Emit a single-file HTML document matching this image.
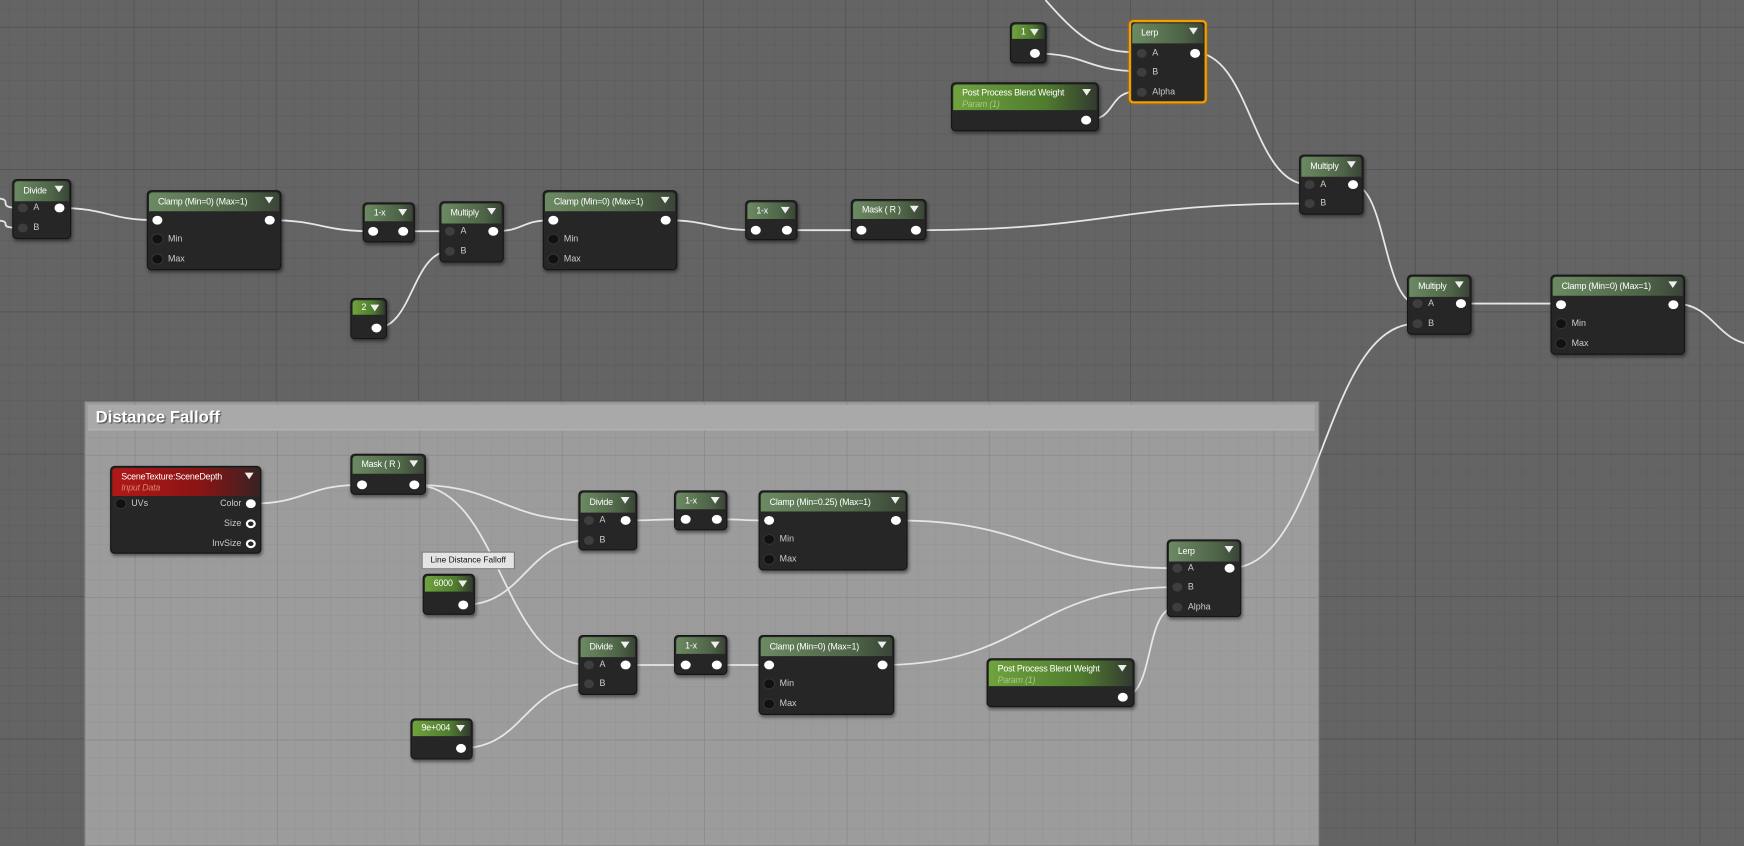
<!DOCTYPE html>
<html><head><meta charset="utf-8"><style>
html,body{margin:0;padding:0;width:1744px;height:844px;overflow:hidden;background:#626262}
#c{position:absolute;left:0;top:0;width:1568px;height:759px;transform:scale(1.11224,1.11199);transform-origin:0 0;
background-color:#646464;
background-image:linear-gradient(rgba(40,40,40,.18) 1px,transparent 1px),linear-gradient(90deg,rgba(40,40,40,.18) 1px,transparent 1px),linear-gradient(rgba(50,50,50,.1) 1px,transparent 1px),linear-gradient(90deg,rgba(50,50,50,.1) 1px,transparent 1px);
background-size:128px 128px,128px 128px,16px 16px,16px 16px;background-position:-8px 24px,-8px 24px,-8px 8px,-8px 8px;
font-family:"Liberation Sans",sans-serif}
.cm{position:absolute;left:76px;top:361px;width:1110px;height:400px;box-sizing:border-box;background-color:#9c9c9c;border:1px solid #8a8a8a;
background-image:linear-gradient(rgba(80,80,80,.14) 1px,transparent 1px),linear-gradient(90deg,rgba(80,80,80,.14) 1px,transparent 1px),linear-gradient(rgba(90,90,90,.08) 1px,transparent 1px),linear-gradient(90deg,rgba(90,90,90,.08) 1px,transparent 1px);
background-size:128px 128px,128px 128px,16px 16px,16px 16px;background-position:-84px -337px,-84px -337px,-84px -353px,-84px -353px}
.cmh{position:absolute;left:2px;top:2px;right:3px;height:22px;background:#a9a9a9;border-bottom:1px solid #b5b5b5;color:#fff;font-weight:bold;font-size:15px;line-height:24px;padding-left:7px;text-shadow:1px 1px 1px #444}
svg{position:absolute;left:0;top:0}
.n{position:absolute;box-sizing:border-box;background:#252625;border:1px solid #151515;border-radius:4px;box-shadow:1px 2px 3px rgba(0,0,0,.45)}
.n.sel{border:2px solid #f0a000;box-shadow:0 0 2px #c07000}
.hd{position:absolute;left:1px;right:1px;top:1px;border-radius:3px 3px 0 0;background:linear-gradient(90deg,#6b8a62,#4e6447 70%,#3a4537);color:#fff;font-size:8px;letter-spacing:-0.2px;line-height:10px;padding-left:8px;box-sizing:border-box;white-space:nowrap;overflow:hidden}
.hd.c{background:linear-gradient(90deg,#6fa33e,#4f7b2e 65%,#333a30)}
.hd.r{background:linear-gradient(90deg,#b01818,#8a1414 60%,#3a2222)}
.hd i{position:absolute;right:5px;top:4px;width:0;height:0;border-left:4px solid transparent;border-right:4px solid transparent;border-top:6px solid #eee;font-style:normal}
.hd s{display:block;text-decoration:none;font-style:italic;color:#a8c88a;font-size:8px}
.hd.r s{color:#e08070}
.p{position:absolute;width:9px;height:8px;border-radius:50%}
.w{background:#fff}
.g{background:#3e3e3e}
.k{background:#111;box-shadow:0 0 0 1px #333}
.o{border:2px solid #fff;width:5px;height:4px}
.l{position:absolute;color:#ccc;font-size:8px;line-height:10px;white-space:nowrap}
.tt{position:absolute;left:379px;top:496px;width:82px;height:14px;background:#e4e4e4;border:1px solid #777;font-size:7.5px;line-height:14px;text-align:center;color:#111}
</style></head><body><div id="c">
<div class="cm"><div class="cmh">Distance Falloff</div></div>
<svg id="w" width="1568" height="759" fill="none" stroke="#e6e6e6" stroke-width="1.6"></svg>
<div id="nodes"></div>
<div class="tt">Line Distance Falloff</div>
</div>
<script>
var W=[[-10,178,20,187],[-10,198,20,205],[53,187,141,198],[242,198,335,208],[362,208,404,208],[338,295,404,226],[443,208,497,198],[598,198,679,207],[707,207,774,207],[823,207,1177,183],[1073,47,1177,166],[930,48,1024,64],[976,108,1024,82],[1216,166,1274,273],[1105,511,1274,291],[1313,273,1404,273],[1505,273,1580,310],[225,453,325,436],[372,436,529,468],[372,436,529,598],[416,544,529,486],[562,468,616,467],[644,467,691,468],[805,468,1058,511],[414,673,529,615],[562,598,616,598],[644,598,691,598],[793,598,1058,528],[1009,627,1058,546]];
var s='';W.forEach(function(a){var d=Math.max(30,Math.abs(a[2]-a[0])/2);s+='<path d="M'+a[0]+' '+a[1]+'C'+(a[0]+d)+' '+a[1]+' '+(a[2]-d)+' '+a[3]+' '+a[2]+' '+a[3]+'"/>';});
s+='<path d="M940 0C975 40 990 47 1024 47"/>';
document.getElementById('w').innerHTML=s;
function N(x,y,w,h,t,o){var hh=o.hh||18;var c='<div class="n'+(o.sel?' sel':'')+'" style="left:'+x+'px;top:'+y+'px;width:'+w+'px;height:'+h+'px">';
c+='<div class="hd '+(o.cl||'')+'" style="height:'+hh+'px;padding-top:'+(o.sub?3:Math.max(1,(hh-10)/2))+'px;padding-right:14px">'+t+(o.sub?'<s>'+o.sub+'</s>':'')+'<i></i></div>';
(o.pins||[]).forEach(function(p){var px=p[0]-x-5,py=p[1]-y-5;c+='<i class="p '+p[2]+'" style="left:'+px+'px;top:'+py+'px"></i>';
if(p[3]){var out=(p[0]-x)>w/2;c+='<span class="l" style="'+(out?'right:'+(w-px+2):'left:'+(px+14))+'px;top:'+(py-1)+'px">'+p[3]+'</span>';}});
return c+'</div>';}
var h='';
h+=N(908,20,33,37,'1',{hh:13,cl:'c',pins:[[930,48,'w']]});
h+=N(1015,18,70,75,'Lerp',{hh:18,sel:1,pins:[[1025,47,'g','A'],[1025,64,'g','B'],[1025,82,'g','Alpha'],[1073,47,'w']]});
h+=N(855,74,133,44,'Post Process Blend Weight',{sub:'Param (1)',hh:23,cl:'c',pins:[[976,108,'w']]});
h+=N(11,161,53,54,'Divide',{pins:[[20,187,'g','A'],[20,205,'g','B'],[53,187,'w']]});
var cl=function(x,y,w,t,hh){return N(x,y,w,72,t||'Clamp (Min=0) (Max=1)',{hh:hh||17,pins:[[x+9,y+27,'w'],[x+w-11,y+27,'w'],[x+9,y+44,'k','Min'],[x+9,y+62,'k','Max']]});};
h+=cl(132,171,121);
h+=N(326,182,47,36,'1-x',{hh:15,pins:[[335,208,'w'],[362,208,'w']]});
h+=N(395,181,58,55,'Multiply',{pins:[[404,208,'g','A'],[404,226,'g','B'],[443,208,'w']]});
h+=N(315,268,33,37,'2',{hh:13,cl:'c',pins:[[338,295,'w']]});
h+=cl(488,171,121);
h+=N(670,180,47,36,'1-x',{hh:15,pins:[[679,207,'w'],[707,207,'w']]});
h+=N(765,179,68,37,'Mask ( R )',{hh:16,pins:[[774,207,'w'],[823,207,'w']]});
h+=N(1168,139,58,54,'Multiply',{pins:[[1177,166,'g','A'],[1177,183,'g','B'],[1216,166,'w']]});
h+=N(1265,247,58,54,'Multiply',{pins:[[1274,273,'g','A'],[1274,291,'g','B'],[1313,273,'w']]});
h+=cl(1394,247,121);
h+=N(99,419,136,79,'SceneTexture:SceneDepth',{sub:'Input Data',cl:'r',hh:25,pins:[[108,453,'k','UVs'],[225,453,'w','Color'],[225,471,'o','Size'],[225,489,'o','InvSize']]});
h+=N(315,408,68,37,'Mask ( R )',{hh:16,pins:[[325,436,'w'],[372,436,'w']]});
h+=N(520,441,53,54,'Divide',{pins:[[529,468,'g','A'],[529,486,'g','B'],[562,468,'w']]});
h+=N(606,441,48,36,'1-x',{hh:15,pins:[[616,467,'w'],[644,467,'w']]});
h+=cl(682,441,134,'Clamp (Min=0.25) (Max=1)');
h+=N(380,516,47,37,'6000',{hh:14,cl:'c',pins:[[416,544,'w']]});
h+=N(1049,485,67,70,'Lerp',{pins:[[1058,511,'g','A'],[1058,528,'g','B'],[1058,546,'g','Alpha'],[1105,511,'w']]});
h+=N(520,571,53,54,'Divide',{pins:[[529,598,'g','A'],[529,615,'g','B'],[562,598,'w']]});
h+=N(606,571,48,36,'1-x',{hh:15,pins:[[616,598,'w'],[644,598,'w']]});
h+=cl(682,571,122);
h+=N(887,592,133,44,'Post Process Blend Weight',{sub:'Param (1)',hh:23,cl:'c',pins:[[1009,627,'w']]});
h+=N(369,646,56,37,'9e+004',{hh:14,cl:'c',pins:[[414,673,'w']]});
document.getElementById('nodes').innerHTML=h;
</script>
</body></html>
